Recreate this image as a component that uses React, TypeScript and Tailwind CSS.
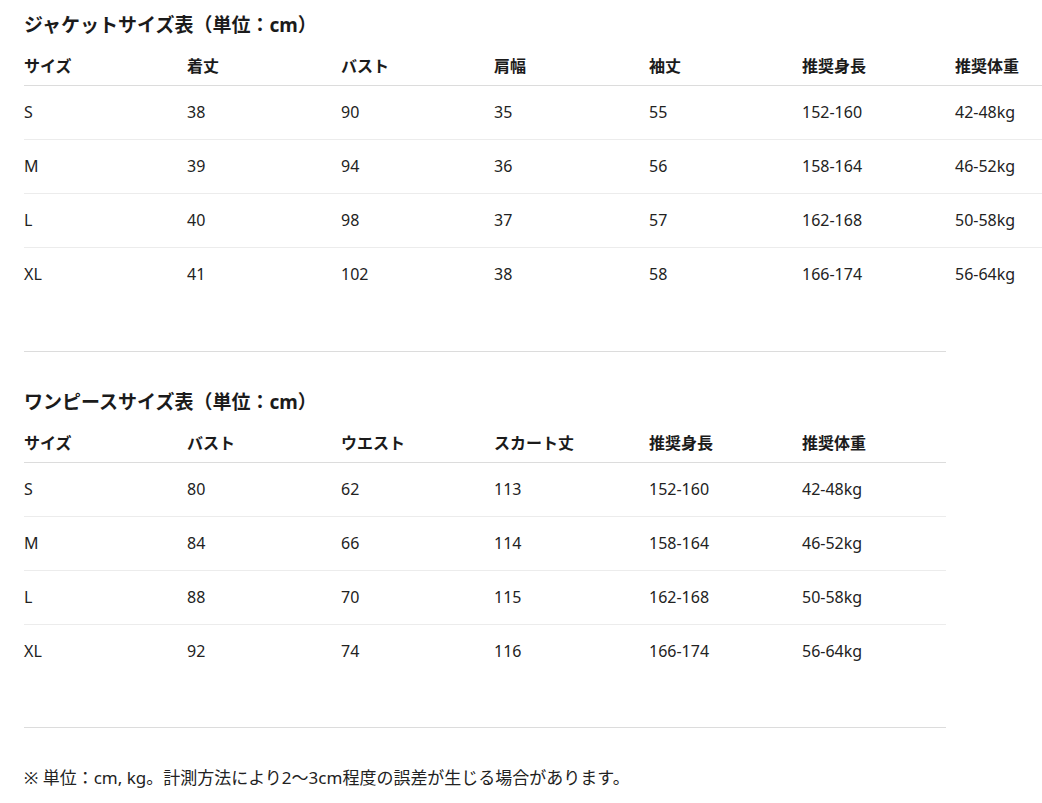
import React from 'react';

type Table = {
  title: string;
  width: string;
  headers: string[];
  widths: string[];
  rows: string[][];
};

const jacket: Table = {
  title: 'ジャケットサイズ表（単位：cm）',
  width: 'w-[1084px]',
  headers: ['サイズ', '着丈', 'バスト', '肩幅', '袖丈', '推奨身長', '推奨体重'],
  widths: ['w-[163px]', 'w-[154px]', 'w-[153px]', 'w-[155px]', 'w-[153px]', 'w-[153px]', 'w-[153px]'],
  rows: [
    ['S', '38', '90', '35', '55', '152-160', '42-48kg'],
    ['M', '39', '94', '36', '56', '158-164', '46-52kg'],
    ['L', '40', '98', '37', '57', '162-168', '50-58kg'],
    ['XL', '41', '102', '38', '58', '166-174', '56-64kg'],
  ],
};

const dress: Table = {
  title: 'ワンピースサイズ表（単位：cm）',
  width: 'w-[922px]',
  headers: ['サイズ', 'バスト', 'ウエスト', 'スカート丈', '推奨身長', '推奨体重'],
  widths: ['w-[163px]', 'w-[154px]', 'w-[153px]', 'w-[155px]', 'w-[153px]', 'w-[144px]'],
  rows: [
    ['S', '80', '62', '113', '152-160', '42-48kg'],
    ['M', '84', '66', '114', '158-164', '46-52kg'],
    ['L', '88', '70', '115', '162-168', '50-58kg'],
    ['XL', '92', '74', '116', '166-174', '56-64kg'],
  ],
};

function SizeTable({ table }: { table: Table }) {
  return (
    <section>
      <h2 className="mb-2 text-[19px] font-bold leading-7 text-[#1b1b1b]">{table.title}</h2>
      <table className={`${table.width} max-w-none table-fixed border-collapse`}>
        <thead>
          <tr className="border-b border-[#dcdcdc]">
            {table.headers.map((h, i) => (
              <th
                key={h}
                className={`${table.widths[i]} h-[38px] p-0 text-left align-middle text-[16px] font-bold leading-6 text-[#1b1b1b]`}
              >
                {h}
              </th>
            ))}
          </tr>
        </thead>
        <tbody>
          {table.rows.map((row, r) => (
            <tr key={row[0]} className={r < table.rows.length - 1 ? 'border-b border-[#ececec]' : ''}>
              {row.map((cell, i) => (
                <td key={i} className="h-[54px] p-0 align-middle text-[16px] leading-6 text-[#222]">
                  {cell}
                </td>
              ))}
            </tr>
          ))}
        </tbody>
      </table>
    </section>
  );
}

export default function App() {
  return (
    <div className="min-h-[803px] w-full overflow-hidden bg-white font-['Noto_Sans','Noto_Sans_CJK_JP',sans-serif]">
      <div className="pl-6 pt-[11px]">
        <SizeTable table={jacket} />
        <hr className="mt-[50px] w-[922px] border-0 border-t border-[#dcdcdc]" />
        <div className="mt-[36px]">
          <SizeTable table={dress} />
        </div>
        <hr className="mt-[49px] w-[922px] border-0 border-t border-[#dcdcdc]" />
        <p className="mt-[38px] text-[17px] leading-6 text-[#222]">
          ※ 単位：cm, kg。計測方法により2〜3cm程度の誤差が生じる場合があります。
        </p>
      </div>
    </div>
  );
}
